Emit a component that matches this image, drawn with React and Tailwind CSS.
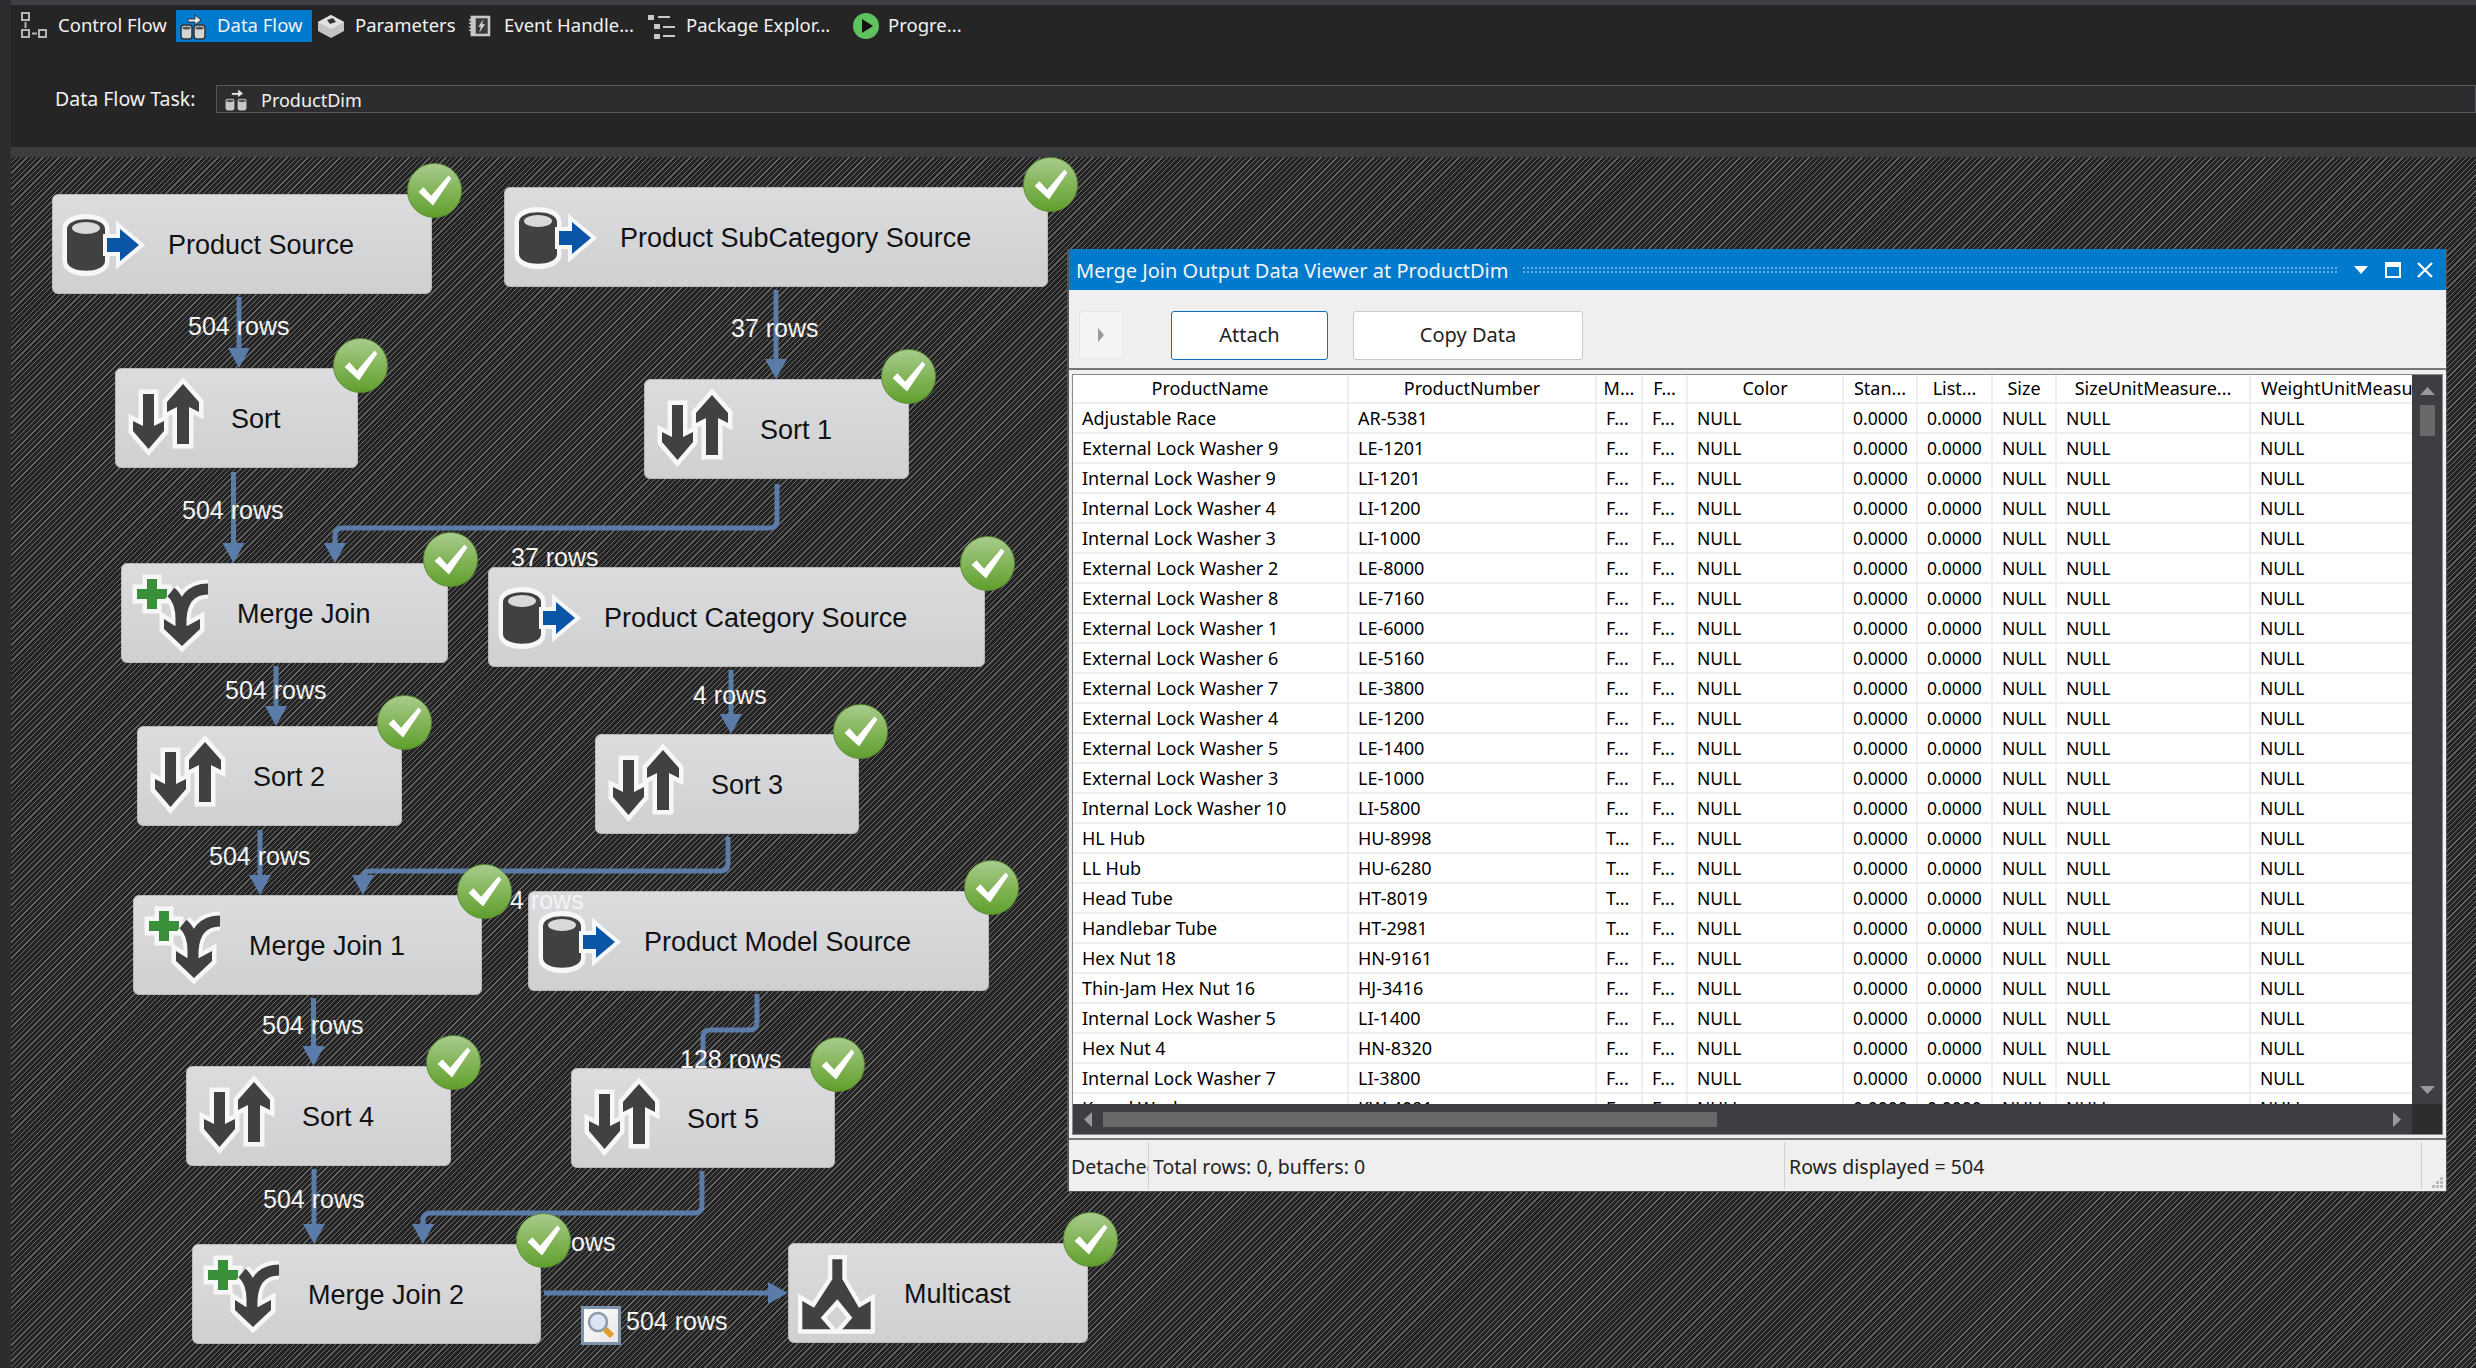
import React from 'react'

const uiFont = "[font-family:'Noto_Sans','Open_Sans',sans-serif]"
const nodeFont = "[font-family:'Liberation_Sans',Arial,sans-serif]"

const nodes = [
  { name: 'Product Source', icon: 'source', pos: 'left-[41px] top-[37px] w-[380px]' },
  { name: 'Product SubCategory Source', icon: 'source', pos: 'left-[493px] top-[30px] w-[544px]' },
  { name: 'Sort', icon: 'sort', pos: 'left-[104px] top-[211px] w-[243px]' },
  { name: 'Sort 1', icon: 'sort', pos: 'left-[633px] top-[222px] w-[265px]' },
  { name: 'Merge Join', icon: 'merge', pos: 'left-[110px] top-[406px] w-[327px]' },
  { name: 'Product Category Source', icon: 'source', pos: 'left-[477px] top-[410px] w-[497px]' },
  { name: 'Sort 2', icon: 'sort', pos: 'left-[126px] top-[569px] w-[265px]' },
  { name: 'Sort 3', icon: 'sort', pos: 'left-[584px] top-[577px] w-[264px]' },
  { name: 'Merge Join 1', icon: 'merge', pos: 'left-[122px] top-[738px] w-[349px]' },
  { name: 'Product Model Source', icon: 'source', pos: 'left-[517px] top-[734px] w-[461px]' },
  { name: 'Sort 4', icon: 'sort', pos: 'left-[175px] top-[909px] w-[265px]' },
  { name: 'Sort 5', icon: 'sort', pos: 'left-[560px] top-[911px] w-[264px]' },
  { name: 'Merge Join 2', icon: 'merge', pos: 'left-[181px] top-[1087px] w-[349px]' },
  { name: 'Multicast', icon: 'multicast', pos: 'left-[777px] top-[1086px] w-[300px]' },
]

// badges sit on the top right corner of each node
const badges = [
  'left-[396px] top-[6px]', 'left-[1012px] top-[0px]', 'left-[322px] top-[181px]', 'left-[870px] top-[192px]',
  'left-[412px] top-[375px]', 'left-[949px] top-[379px]', 'left-[366px] top-[538px]', 'left-[822px] top-[547px]',
  'left-[446px] top-[707px]', 'left-[953px] top-[703px]', 'left-[415px] top-[878px]', 'left-[799px] top-[880px]',
  'left-[505px] top-[1056px]', 'left-[1052px] top-[1055px]',
]

const labels = [
  { text: '504 rows', pos: 'left-[177px] top-[154px]' },
  { text: '37 rows', pos: 'left-[720px] top-[156px]' },
  { text: '504 rows', pos: 'left-[171px] top-[338px]' },
  { text: '37 rows', pos: 'left-[500px] top-[385px]' },
  { text: '504 rows', pos: 'left-[214px] top-[518px]' },
  { text: '4 rows', pos: 'left-[682px] top-[523px]' },
  { text: '504 rows', pos: 'left-[198px] top-[684px]' },
  { text: '4 rows', pos: 'left-[499px] top-[728px]' },
  { text: '504 rows', pos: 'left-[251px] top-[853px]' },
  { text: '128 rows', pos: 'left-[669px] top-[887px]' },
  { text: '504 rows', pos: 'left-[252px] top-[1027px]' },
  { text: '128 rows', pos: 'left-[503px] top-[1070px]' },
  { text: '504 rows', pos: 'left-[615px] top-[1149px]' },
]

const rows = [
  ['Adjustable Race', 'AR-5381', 'F...'],
  ['External Lock Washer 9', 'LE-1201', 'F...'],
  ['Internal Lock Washer 9', 'LI-1201', 'F...'],
  ['Internal Lock Washer 4', 'LI-1200', 'F...'],
  ['Internal Lock Washer 3', 'LI-1000', 'F...'],
  ['External Lock Washer 2', 'LE-8000', 'F...'],
  ['External Lock Washer 8', 'LE-7160', 'F...'],
  ['External Lock Washer 1', 'LE-6000', 'F...'],
  ['External Lock Washer 6', 'LE-5160', 'F...'],
  ['External Lock Washer 7', 'LE-3800', 'F...'],
  ['External Lock Washer 4', 'LE-1200', 'F...'],
  ['External Lock Washer 5', 'LE-1400', 'F...'],
  ['External Lock Washer 3', 'LE-1000', 'F...'],
  ['Internal Lock Washer 10', 'LI-5800', 'F...'],
  ['HL Hub', 'HU-8998', 'T...'],
  ['LL Hub', 'HU-6280', 'T...'],
  ['Head Tube', 'HT-8019', 'T...'],
  ['Handlebar Tube', 'HT-2981', 'T...'],
  ['Hex Nut 18', 'HN-9161', 'F...'],
  ['Thin-Jam Hex Nut 16', 'HJ-3416', 'F...'],
  ['Internal Lock Washer 5', 'LI-1400', 'F...'],
  ['Hex Nut 4', 'HN-8320', 'F...'],
  ['Internal Lock Washer 7', 'LI-3800', 'F...'],
  ['Keyed Washer', 'KW-4091', 'F...'],
]

const columns = 'grid grid-cols-[276px_248px_46px_45px_156px_74px_75px_64px_194px_161px]'
const headers = ['ProductName', 'ProductNumber', 'M...', 'F...', 'Color', 'Stan...', 'List...', 'Size', 'SizeUnitMeasure...']

function Halo({ d, fill, halo = 9 }) {
  return (
    <>
      <path d={d} fill="#f7f7f8" stroke="#f7f7f8" strokeWidth={halo} strokeLinejoin="miter" />
      <path d={d} fill={fill} />
    </>
  )
}

function NodeIcon({ type }) {
  return (
    <svg viewBox="0 0 100 100" className="absolute left-0 top-0 w-[100px] h-[100px]">
      {type === 'source' && (
        <>
          <path d="M14 34C14 20 52 20 52 34V66C52 80 14 80 14 66Z" fill="#f7f7f8" stroke="#f7f7f8" strokeWidth="9" />
          <path d="M14 34C14 21 52 21 52 34V66C52 79 14 79 14 66Z" fill="#414141" />
          <ellipse cx="33" cy="33" rx="14" ry="6" fill="#d9d9db" />
          <Halo d="M54 43H67V34L86 50L67 66V57H54Z" fill="#0a55a5" halo={8} />
        </>
      )}
      {type === 'sort' && (
        <>
          <Halo d="M27 25H38V57L48 52V62L32.5 80L17 62V52L27 57Z" fill="#414141" />
          <Halo d="M61 75V38L51 43V33L67 15L83 33V43L73 38V75Z" fill="#414141" />
        </>
      )}
      {type === 'merge' && (
        <>
          <Halo d="M25 15H35V25H45V35H35V45H25V35H15V25H25Z" fill="#3a8f3a" />
          <path d="M86 25C70 25 60 35 59 55V70M49 28C55 33 59 40 59 55" fill="none" stroke="#f7f7f8" strokeWidth="19" />
          <path d="M42 55L53 62H65L78 55V65L60 82L42 65Z" fill="#f7f7f8" stroke="#f7f7f8" strokeWidth="9" />
          <path d="M86 25C70 25 60 35 59 55V70M49 28C55 33 59 40 59 55" fill="none" stroke="#414141" strokeWidth="11" />
          <path d="M42 55L53 62H65L78 55V65L60 82L42 65Z" fill="#414141" />
        </>
      )}
      {type === 'multicast' && (
        <g transform="translate(-5,-8) scale(0.3333)">
          <Halo d="M145 70H175V130L225 215L260 195V280H175L205 245L160 190L110 245L140 280H55V195L90 215L145 130Z" fill="#414141" halo={26} />
        </g>
      )}
    </svg>
  )
}

function Node({ name, icon, pos }) {
  return (
    <div className={`absolute ${pos} h-[100px] rounded-[6px] border border-[#b9b9bb] bg-gradient-to-b from-[#dcdcdf] to-[#cfd0d2] ${nodeFont}`}>
      <NodeIcon type={icon} />
      <div className="absolute left-[115px] top-[1px] h-full flex items-center text-[27px] text-[#111] whitespace-nowrap">{name}</div>
    </div>
  )
}

function Badge({ pos }) {
  return (
    <div className={`absolute ${pos} w-[55px] h-[55px] rounded-full border border-[#5d8f33] bg-gradient-to-b from-[#a8cb8e] via-[#84b558] to-[#5f9f2c]`}>
      <svg viewBox="0 0 55 55" className="w-full h-full">
        <path d="M11 29L16 24L24 33L42 12L45 15L26 43Z" fill="#fff" />
      </svg>
    </div>
  )
}

// connector lines of the data flow, in page coordinates
function Connectors() {
  const blue = '#5b7ba8'
  const lines = [
    'M239 297V350', 'M776 290V362', 'M233.5 472V545', 'M777 484V520Q777 528 769 528H343Q335 528 335 536V545',
    'M276 666V708', 'M731 670V716', 'M260 830V877', 'M728 837V863Q728 871 720 871H371Q363 871 363 879V877',
    'M313.5 998V1048', 'M757 994V1022Q757 1030 749 1030H711Q703 1030 703 1038V1068', 'M314 1169V1226',
    'M702 1171V1205Q702 1213 694 1213H431Q423 1213 423 1221V1226', 'M544 1293H770',
  ]
  const heads = [
    [239, 368], [776, 379], [233.5, 563], [335, 563], [276, 726], [731, 734], [260, 895], [363, 895],
    [313.5, 1066], [314, 1244], [423, 1244],
  ]
  return (
    <svg viewBox="11 157 2465 1211" className="absolute left-0 top-0 w-[2465px] h-[1211px]">
      {lines.map(d => <path key={d} d={d} fill="none" stroke={blue} strokeWidth="5" />)}
      {heads.map(([x, y]) => <path key={`${x}-${y}`} d={`M${x - 11} ${y - 20}H${x + 11}L${x} ${y}Z`} fill={blue} />)}
      <path d="M768 1282V1304L788 1293Z" fill={blue} />
    </svg>
  )
}

function Cylinders({ light = '#d5d5d5', edge = '#333' }) {
  return (
    <>
      <path d="M9 7H16V3L22 8L16 13V10H9Z" fill="#e8e8e8" stroke={edge} strokeWidth="1" />
      <rect x="2" y="13" width="11" height="14" rx="3" fill={light} stroke={edge} strokeWidth="1.5" />
      <rect x="15" y="13" width="11" height="14" rx="3" fill={light} stroke={edge} strokeWidth="1.5" />
      <ellipse cx="7.5" cy="16" rx="4" ry="1.5" fill="#555" />
      <ellipse cx="20.5" cy="16" rx="4" ry="1.5" fill="#555" />
    </>
  )
}

function TabIcon({ type }) {
  if (type === 'control') {
    return (
      <svg viewBox="0 0 28 28" className="w-[28px] h-[28px]" fill="none" stroke="#b5b5b5" strokeWidth="2">
        <rect x="2" y="1" width="7" height="7" />
        <rect x="2" y="18" width="7" height="7" />
        <rect x="19" y="18" width="7" height="7" />
        <path d="M5.5 10V16M12 21.5H17" />
      </svg>
    )
  }
  if (type === 'data') {
    return <svg viewBox="0 0 28 28" className="w-[28px] h-[28px]"><Cylinders /></svg>
  }
  if (type === 'params') {
    return (
      <svg viewBox="0 0 28 28" className="w-[28px] h-[28px]">
        <path d="M14 3L27 10V19L14 26L1 19V10Z" fill="#c4c4c4" />
        <path d="M14 3L27 10L14 17L1 10Z" fill="#e2e2e2" />
        <path d="M10 8L16 6L19 10L13 12Z" fill="#333" />
      </svg>
    )
  }
  if (type === 'event') {
    return (
      <svg viewBox="0 0 28 28" className="w-[24px] h-[28px]">
        <rect x="3" y="2" width="23" height="24" fill="#c8c8c8" />
        <rect x="9" y="5" width="14" height="18" fill="#3a3a3a" />
        <path d="M18 6L12 15H15L13 22L20 12H16.5Z" fill="#d0d0d0" />
        <path d="M1 7H5M1 11H5M1 15H5M1 19H5" stroke="#c8c8c8" strokeWidth="1.5" />
      </svg>
    )
  }
  if (type === 'package') {
    return (
      <svg viewBox="0 0 28 28" className="w-[28px] h-[28px]" fill="#c8c8c8">
        <rect x="0" y="3" width="6" height="5" />
        <rect x="6" y="12" width="6" height="5" />
        <rect x="6" y="22" width="6" height="5" />
        <rect x="10" y="4" width="12" height="2" />
        <rect x="15" y="14" width="12" height="2" />
        <rect x="15" y="23" width="12" height="2" />
      </svg>
    )
  }
  return (
    <svg viewBox="0 0 28 28" className="w-[28px] h-[28px]">
      <circle cx="14" cy="14" r="13" fill="#5fc15f" />
      <path d="M10 7L21 14L10 21Z" fill="#111" />
    </svg>
  )
}

function Tab({ icon, label, active, className }) {
  return (
    <div className={`flex items-center gap-[10px] h-[32px] text-[18.5px] text-[#f1f1f1] ${className} ${active ? 'bg-[#007acc]' : ''}`}>
      <TabIcon type={icon} />
      <span className="whitespace-nowrap pb-[2px]">{label}</span>
    </div>
  )
}

function DataViewer() {
  return (
    <div className={`absolute left-[1056px] top-[92px] w-[1380px] h-[943px] flex flex-col bg-[#efefef] border-r border-b border-l-2 border-[#555] ${uiFont}`}>
      <div className="h-[41px] shrink-0 flex items-center bg-[#007acc] pl-[7px] pr-[13px] text-[#f4f4f4]">
        <span className="text-[20px] whitespace-nowrap pt-[3px]">Merge Join Output Data Viewer at ProductDim</span>
        <div className="flex-1 h-[8px] ml-[14px] bg-[radial-gradient(circle,#66aee0_1px,transparent_1px)] bg-[length:4px_4px]" />
        <svg viewBox="0 0 14 8" className="w-[14px] h-[8px] ml-[16px]"><path d="M0 0H14L7 8Z" fill="#fff" /></svg>
        <div className="w-[16px] h-[16px] ml-[17px] border-2 border-t-[5px] border-white" />
        <svg viewBox="0 0 16 16" className="w-[16px] h-[16px] ml-[16px]"><path d="M1 1L15 15M15 1L1 15" stroke="#fff" strokeWidth="2.2" /></svg>
      </div>

      <div className="h-[80px] shrink-0 flex items-center border-b-2 border-[#777] pl-[10px] pt-[12px] text-[20px] text-[#222]">
        <div className="w-[44px] h-[48px] flex items-center justify-center rounded-[3px] bg-[#f4f4f4] border border-[#e8e8e8]">
          <svg viewBox="0 0 6 14" className="w-[6px] h-[14px]"><path d="M0 0L6 7L0 14Z" fill="#999" /></svg>
        </div>
        <button className="ml-[48px] w-[157px] h-[49px] rounded-[3px] bg-white border border-[#0e70c0]">Attach</button>
        <button className="ml-[25px] w-[230px] h-[49px] rounded-[3px] bg-white border border-[#c9c9c9]">Copy Data</button>
      </div>

      <div className="mt-[4px] mx-[3px] h-[761px] shrink-0 flex flex-col border border-[#8a8a8a] bg-white">
        <div className="flex flex-1 min-h-0">
          <div className="flex-1 min-w-0 overflow-hidden text-[18px] text-black">
            <div className={`${columns} h-[29px] border-b-2 border-[#eeeeee]`}>
              {headers.map(h => (
                <div key={h} className="flex items-center justify-center border-r-2 border-[#f0f0f0] whitespace-nowrap overflow-hidden">{h}</div>
              ))}
              <div className="flex items-center pl-[10px] whitespace-nowrap overflow-hidden">WeightUnitMeasure</div>
            </div>
            {rows.map(([name, number, flag], i) => (
              <div key={i} className={`${columns} h-[30px] border-b-2 border-[#eeeeee]`}>
                {[name, number, flag, 'F...', 'NULL', '0.0000', '0.0000', 'NULL', 'NULL', 'NULL'].map((c, j) => (
                  <div key={j} className={`flex items-center pl-[9px] border-r-2 border-[#f0f0f0] last:border-r-0 whitespace-nowrap overflow-hidden ${j > 3 ? 'text-[17.5px]' : ''}`}>{c}</div>
                ))}
              </div>
            ))}
          </div>
          <div className="w-[30px] shrink-0 flex flex-col items-center bg-[#3e3e42] pt-[12px] pb-[10px]">
            <svg viewBox="0 0 15 8" className="w-[15px] h-[8px]"><path d="M0 8H15L7.5 0Z" fill="#999" /></svg>
            <div className="w-[15px] h-[31px] mt-[10px] bg-[#686868]" />
            <svg viewBox="0 0 15 8" className="w-[15px] h-[8px] mt-auto"><path d="M0 0H15L7.5 8Z" fill="#999" /></svg>
          </div>
        </div>
        <div className="h-[30px] shrink-0 flex">
          <div className="flex-1 flex items-center bg-[#3e3e42] pl-[11px] pr-[11px]">
            <svg viewBox="0 0 8 15" className="w-[8px] h-[15px]"><path d="M8 0V15L0 7.5Z" fill="#999" /></svg>
            <div className="w-[614px] h-[15px] ml-[11px] bg-[#686868]" />
            <svg viewBox="0 0 8 15" className="w-[8px] h-[15px] ml-auto"><path d="M0 0V15L8 7.5Z" fill="#999" /></svg>
          </div>
          <div className="w-[30px] bg-[#2d2d30]" />
        </div>
      </div>

      <div className="mt-[3px] flex-1 flex items-stretch border-t-2 border-[#777] text-[19.5px] text-[#222] relative">
        <div className="w-[80px] shrink-0 overflow-hidden flex items-center pl-[2px] pt-[3px] my-[2px] border-r border-[#d0d0d0] whitespace-nowrap">Detached</div>
        <div className="w-[636px] shrink-0 flex items-center pl-[4px] pt-[3px] my-[2px] border-r border-[#d0d0d0] whitespace-nowrap">Total rows: 0, buffers: 0</div>
        <div className="w-[637px] shrink-0 flex items-center pl-[4px] pt-[3px] my-[2px] border-r border-[#d0d0d0] whitespace-nowrap">Rows displayed = 504</div>
        <svg viewBox="0 0 12 12" className="absolute right-[2px] bottom-[2px] w-[12px] h-[12px]" fill="#bbb">
          <rect x="8" y="0" width="3" height="3" /><rect x="4" y="4" width="3" height="3" /><rect x="8" y="4" width="3" height="3" />
          <rect x="0" y="8" width="3" height="3" /><rect x="4" y="8" width="3" height="3" /><rect x="8" y="8" width="3" height="3" />
        </svg>
      </div>
    </div>
  )
}

export default function App() {
  return (
    <div className="w-[2476px] h-[1368px] overflow-hidden flex bg-[#252526]">
      <div className="w-[11px] shrink-0 bg-[#2d2d30]" />
      <div className="flex-1 min-w-0 flex flex-col">
        {/* Designer tabs */}
        <div className="h-[5px] shrink-0 bg-[#3f3f46]" />
        <div className={`flex mt-[5px] ${uiFont}`}>
          <Tab icon="control" label="Control Flow" className="w-[165px] pl-[9px]" />
          <Tab icon="data" label="Data Flow" active className="w-[136px] pl-[3px]" />
          <Tab icon="params" label="Parameters" className="w-[148px] pl-[5px]" />
          <Tab icon="event" label="Event Handle..." className="w-[180px] pl-[8px] !gap-[12px]" />
          <Tab icon="package" label="Package Explor..." className="w-[205px] pl-[8px]" />
          <Tab icon="progress" label="Progre..." className="pl-[7px] !gap-[8px]" />
        </div>

        {/* Task selector */}
        <div className={`flex items-center mt-[43px] h-[28px] ${uiFont} text-[#f1f1f1]`}>
          <span className="w-[205px] pl-[44px] text-[19.5px] whitespace-nowrap">Data Flow Task:</span>
          <div className="flex-1 h-full flex items-center gap-[12px] pl-[6px] text-[18px] bg-[#2d2d30] border border-[#58585c]">
            <svg viewBox="0 0 28 28" className="w-[26px] h-[26px]"><Cylinders light="#c8c8c8" edge="#2d2d30" /></svg>
            <span className="pt-[2px]">ProductDim</span>
          </div>
        </div>
        <div className="h-[34px] shrink-0" />
        <div className="h-[10px] shrink-0 bg-[#3a3c40]" />

        {/* Design surface */}
        <div className="relative flex-1 min-h-0 overflow-hidden bg-[repeating-linear-gradient(135deg,#686868_0px,#686868_0.9px,#242425_0.9px,#242425_3.75px)]">
          <Connectors />
          {nodes.map(n => <Node key={n.name} {...n} />)}
          {labels.map((l, i) => (
            <div key={i} className={`absolute ${l.pos} h-[30px] leading-[30px] text-[25px] text-[#f4f4f4] whitespace-nowrap ${nodeFont}`}>{l.text}</div>
          ))}
          <div className="absolute left-[570px] top-[1149px] w-[40px] h-[39px] border-[3px] border-[#7d93ae] bg-gradient-to-br from-white to-[#e6e6e6]">
            <svg viewBox="0 0 34 33" className="w-full h-full">
              <circle cx="14" cy="13" r="9" fill="#dbe6f5" stroke="#8e9aa8" strokeWidth="2.5" />
              <path d="M21 20L28 27" stroke="#e39a2d" strokeWidth="6" />
            </svg>
          </div>
          {badges.map(b => <Badge key={b} pos={b} />)}
          <DataViewer />
        </div>
      </div>
    </div>
  )
}
